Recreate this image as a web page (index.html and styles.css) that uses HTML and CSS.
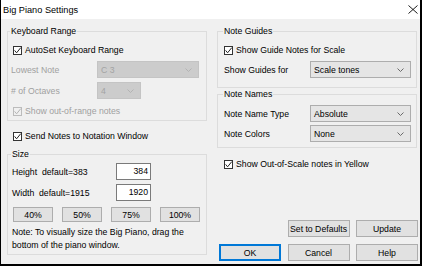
FILE: index.html
```html
<!DOCTYPE html>
<html lang="en">
<head>
  <meta charset="UTF-8" />
  <title>Big Piano Settings</title>
  <link rel="stylesheet" href="styles.css">
</head>
<body>

  <div class="window">

    <!-- Title bar -->
    <div class="titlebar">
      <span class="title">Big Piano Settings</span>
      <svg class="close" width="10" height="9" viewBox="0 0 10 9">
        <path d="M0.5 0.5 L9.5 8.5 M9.5 0.5 L0.5 8.5" stroke="#000" stroke-width="0.9" fill="none"/>
      </svg>
    </div>

    <div class="content">

      <!-- Left column -->
      <div class="col">
        <fieldset class="group keyboard">
          <legend>Keyboard Range</legend>
          <div class="check-row indent">
            <svg class="box" width="9" height="9" viewBox="0 0 9 9"><rect x="0.5" y="0.5" width="8" height="8" fill="#fff" stroke="#333"/><path d="M1.6 4.4 L3.6 6.8 L7.8 1.6" stroke="#222" fill="none"/></svg>
            <span>AutoSet Keyboard Range</span>
          </div>
          <div class="field-row disabled">
            <span class="field-label">Lowest Note</span>
            <div class="combo off wide"><span>C 3</span><svg width="7" height="4" viewBox="0 0 7 4"><path d="M0.5 0.5 L3.5 3.5 L6.5 0.5" stroke="#b3b3b3" fill="none"/></svg></div>
          </div>
          <div class="field-row disabled">
            <span class="field-label"># of Octaves</span>
            <div class="combo off narrow"><span>4</span><svg width="7" height="4" viewBox="0 0 7 4"><path d="M0.5 0.5 L3.5 3.5 L6.5 0.5" stroke="#b3b3b3" fill="none"/></svg></div>
          </div>
          <div class="check-row indent disabled last">
            <svg class="box" width="9" height="9" viewBox="0 0 9 9"><rect x="0.5" y="0.5" width="8" height="8" fill="#f0f0f0" stroke="#bcbcbc"/><path d="M1.6 4.4 L3.6 6.8 L7.8 1.6" stroke="#b5b5b5" fill="none"/></svg>
            <span>Show out-of-range notes</span>
          </div>
        </fieldset>

        <div class="check-row send">
          <svg class="box" width="9" height="9" viewBox="0 0 9 9"><rect x="0.5" y="0.5" width="8" height="8" fill="#fff" stroke="#333"/><path d="M1.6 4.4 L3.6 6.8 L7.8 1.6" stroke="#222" fill="none"/></svg>
          <span>Send Notes to Notation Window</span>
        </div>

        <fieldset class="group size">
          <legend>Size</legend>
          <div class="size-row">
            <span class="size-label">Height&nbsp; default=383</span>
            <div class="num">384</div>
          </div>
          <div class="size-row">
            <span class="size-label">Width&nbsp; default=1915</span>
            <div class="num">1920</div>
          </div>
          <div class="percent-row">
            <button class="btn small">40%</button>
            <button class="btn small">50%</button>
            <button class="btn small">75%</button>
            <button class="btn small">100%</button>
          </div>
          <p class="note">Note: To visually size the Big Piano, drag the bottom of the piano window.</p>
        </fieldset>
      </div>

      <!-- Right column -->
      <div class="col">
        <fieldset class="group guides">
          <legend>Note Guides</legend>
          <div class="check-row">
            <svg class="box" width="9" height="9" viewBox="0 0 9 9"><rect x="0.5" y="0.5" width="8" height="8" fill="#fff" stroke="#333"/><path d="M1.6 4.4 L3.6 6.8 L7.8 1.6" stroke="#222" fill="none"/></svg>
            <span>Show Guide Notes for Scale</span>
          </div>
          <div class="field-row">
            <span class="field-label">Show Guides for</span>
            <div class="combo right"><span>Scale tones</span><svg width="7" height="4" viewBox="0 0 7 4"><path d="M0.5 0.5 L3.5 3.5 L6.5 0.5" stroke="#6a6a6a" fill="none"/></svg></div>
          </div>
        </fieldset>

        <fieldset class="group names">
          <legend>Note Names</legend>
          <div class="field-row">
            <span class="field-label">Note Name Type</span>
            <div class="combo right"><span>Absolute</span><svg width="7" height="4" viewBox="0 0 7 4"><path d="M0.5 0.5 L3.5 3.5 L6.5 0.5" stroke="#6a6a6a" fill="none"/></svg></div>
          </div>
          <div class="field-row">
            <span class="field-label">Note Colors</span>
            <div class="combo right"><span>None</span><svg width="7" height="4" viewBox="0 0 7 4"><path d="M0.5 0.5 L3.5 3.5 L6.5 0.5" stroke="#6a6a6a" fill="none"/></svg></div>
          </div>
        </fieldset>

        <div class="check-row yellow">
          <svg class="box" width="9" height="9" viewBox="0 0 9 9"><rect x="0.5" y="0.5" width="8" height="8" fill="#fff" stroke="#333"/><path d="M1.6 4.4 L3.6 6.8 L7.8 1.6" stroke="#222" fill="none"/></svg>
          <span>Show Out-of-Scale notes in Yellow</span>
        </div>

        <div class="dialog-buttons">
          <span></span>
          <button class="btn">Set to Defaults</button>
          <button class="btn">Update</button>
          <button class="btn default">OK</button>
          <button class="btn">Cancel</button>
          <button class="btn">Help</button>
        </div>
      </div>

    </div>
  </div>

</body>
</html>
```

FILE: styles.css
```css
body {
  margin: 0;
  background: #fff;
}

.window {
  width: 422px;
  height: 266px;
  box-sizing: border-box;
  border: solid #000;
  border-width: 0 2px 2px 1px;
  background: #f0f0f0;
  display: flex;
  flex-direction: column;
  font-family: "Liberation Sans", Arial, sans-serif;
  font-size: 8.7px;
  color: #000;
}

.titlebar {
  height: 19px;
  flex-shrink: 0;
  background: #fff;
  display: flex;
  align-items: center;
  justify-content: space-between;
  padding: 0 2px;
}

.title {
  font-size: 9.2px;
}

.content {
  flex: 1;
  display: grid;
  grid-template-columns: 200px 200px;
  column-gap: 10px;
  padding-left: 6px;
}

.col {
  display: flex;
  flex-direction: column;
}

/* group boxes */
.group {
  margin: 0;
  padding: 0 4px 0 3px;
  border: 1px solid #dcdcdc;
  min-width: 0;
  display: flex;
  flex-direction: column;
}

.group legend {
  padding: 0 1px;
  margin-left: -1px;
  height: 11px;
  line-height: 11px;
}

.keyboard {
  margin-top: 7px;
  padding-top: 6px;
  padding-bottom: 2px;
  gap: 4px;
}

.size {
  margin-top: 6px;
  padding: 3px 6px 2px 4px;
}

.guides {
  margin-top: 7px;
  padding: 6px 4px 9px 6px;
  gap: 4px;
}

.names {
  margin-top: 1px;
  padding: 5px 4px 5px 6px;
  gap: 3px;
}

/* checkbox rows */
.check-row {
  height: 14px;
  display: flex;
  align-items: center;
  gap: 3px;
}

.check-row .box {
  flex-shrink: 0;
}

.indent {
  margin-left: 2px;
}

.last {
  margin-top: 1px;
}

.send {
  margin: 8px 0 0 6px;
}

.yellow {
  margin: 9px 0 0 7px;
}

.disabled {
  color: #a0a0a0;
}

/* label + dropdown rows */
.field-row {
  height: 17px;
  display: flex;
  align-items: center;
}

.field-label {
  width: 86px;
  flex-shrink: 0;
}

.combo {
  height: 17px;
  box-sizing: border-box;
  border: 1px solid #adadad;
  background: #e5e5e5;
  display: flex;
  align-items: center;
  justify-content: space-between;
  padding: 0 6px 0 3px;
}

.combo.off {
  background: #cccccc;
  border-color: #c4c4c4;
  color: #a3a3a3;
}

.combo.wide {
  width: 102px;
}

.combo.narrow {
  width: 44px;
}

.combo.right {
  width: 101px;
}

/* size group */
.size-row {
  height: 17px;
  display: flex;
  align-items: center;
}

.size-row + .size-row {
  margin-top: 4px;
}

.size-label {
  width: 104px;
  flex-shrink: 0;
}

.num {
  width: 35px;
  height: 17px;
  box-sizing: border-box;
  border: 1px solid #7a7a7a;
  background: #fff;
  text-align: right;
  line-height: 15px;
  padding-right: 2px;
}

.percent-row {
  margin: 6px 0 0 1px;
  display: flex;
  justify-content: space-between;
}

.note {
  margin: 4px 0 0;
  line-height: 13px;
}

/* buttons */
.btn {
  font: inherit;
  color: #000;
  background: #e1e1e1;
  border: 1px solid #adadad;
  padding: 0;
  height: 17px;
  margin: 0;
}

.btn.small {
  width: 40px;
  height: 15px;
}

.btn.default {
  border: 2px solid #0078d7;
}

.dialog-buttons {
  margin-top: auto;
  margin-bottom: 3px;
  padding-left: 2px;
  display: grid;
  grid-template-columns: repeat(3, 62px);
  column-gap: 6.5px;
  row-gap: 7px;
}
```
